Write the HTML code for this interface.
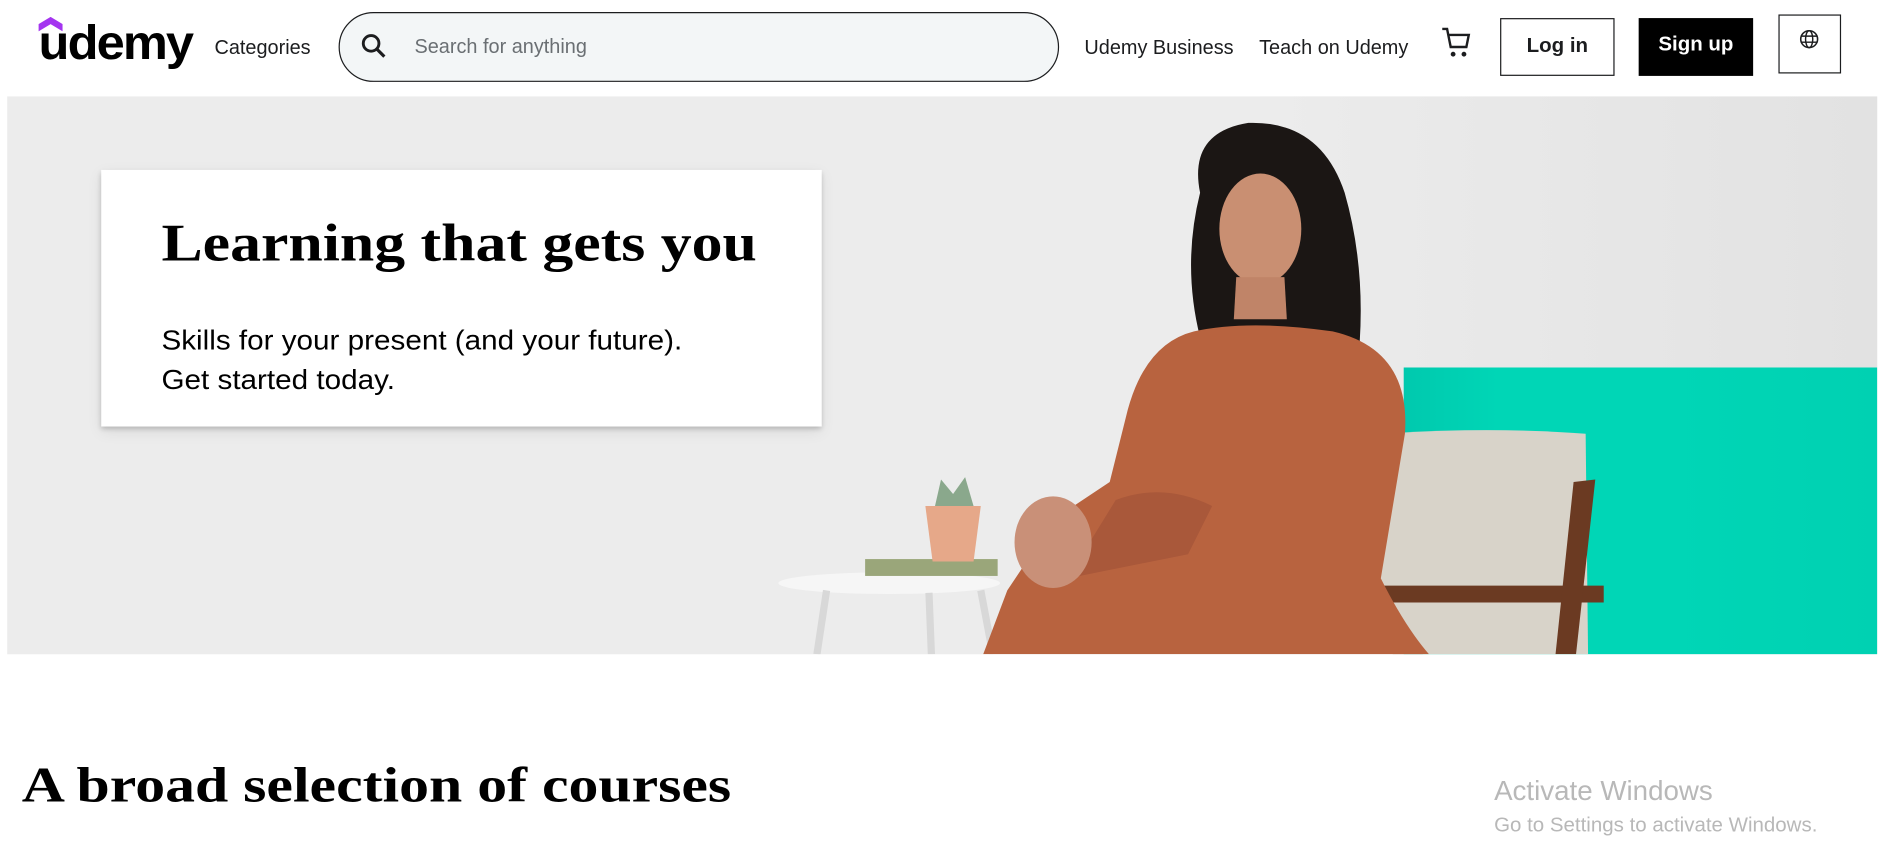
<!DOCTYPE html>
<html><head><meta charset="utf-8"><style>
html,body{margin:0;padding:0;background:#fff;overflow:hidden;width:1889px;height:854px}
#w{width:1560px;height:710px;position:relative;transform:scale(1.2049);transform-origin:0 0;font-family:"Liberation Sans",sans-serif;color:#1c1d1f}
.a{position:absolute;white-space:nowrap}
.serif{font-family:"Liberation Serif",serif;font-weight:bold;transform-origin:0 0}
</style></head><body><div id="w">
<div class="a" style="left:32px;top:14px;font-size:40px;font-weight:bold;letter-spacing:-1.5px;color:#000;transform:scaleX(1.05);transform-origin:0 0">udemy</div>
<svg class="a" style="left:32px;top:14px" width="20" height="12"><path d="M0 12V6L10 0L20 6V12L10 6Z" fill="#a435f0"/></svg>
<div class="a" style="left:178px;top:31px;font-size:16.5px">Categories</div>
<div class="a" style="left:281px;top:10px;width:596px;height:56px;border:1px solid #1c1d1f;border-radius:29px;background:#f3f6f7"></div>
<svg class="a" style="left:299px;top:27px" width="22" height="22"><circle cx="9" cy="9" r="6.5" stroke="#1c1d1f" stroke-width="2.4" fill="none"/><path d="M14 14L20 20" stroke="#1c1d1f" stroke-width="2.6"/></svg>
<div class="a" style="left:344px;top:30px;font-size:16.5px;color:#6a6f73">Search for anything</div>
<div class="a" style="left:900px;top:31px;font-size:16.5px">Udemy Business</div>
<div class="a" style="left:1045px;top:31px;font-size:16.5px">Teach on Udemy</div>
<svg class="a" style="left:1196px;top:22px" width="26" height="28"><path d="M1 2H5L8 17H21L23 7H6" stroke="#1c1d1f" stroke-width="2" fill="none"/><circle cx="10" cy="23" r="2" fill="#1c1d1f"/><circle cx="19" cy="23" r="2" fill="#1c1d1f"/></svg>
<div class="a" style="left:1245px;top:15px;width:93px;height:46px;border:1px solid #1c1d1f;font-weight:bold;font-size:17px;text-align:center;line-height:44px">Log in</div>
<div class="a" style="left:1360px;top:15px;width:95px;height:48px;background:#000;color:#fff;font-weight:bold;font-size:17px;text-align:center;line-height:44px">Sign up</div>
<div class="a" style="left:1476px;top:12px;width:50px;height:47px;border:1px solid #1c1d1f"></div>
<svg class="a" style="left:1493px;top:24px" width="17" height="17"><circle cx="8.5" cy="8.5" r="7" stroke="#1c1d1f" stroke-width="1.3" fill="none"/><ellipse cx="8.5" cy="8.5" rx="3" ry="7" stroke="#1c1d1f" stroke-width="1.2" fill="none"/><path d="M1.5 6H15.5M1.5 11H15.5" stroke="#1c1d1f" stroke-width="1.2"/></svg>
<div class="a" style="left:6px;top:80px;width:1552px;height:463px;background:#ececec;overflow:hidden">
<div class="a" style="left:1040px;top:0;width:512px;height:463px;background:linear-gradient(90deg,#ececec,#e2e2e2)"></div>
<div class="a" style="left:1159px;top:225px;width:393px;height:238px;background:linear-gradient(90deg,#00c9ae 0%,#00d6b6 20%,#00d6b6 55%,#00d1b2 100%)"></div>
<svg class="a" style="left:0;top:0" width="1552" height="463">
<ellipse cx="732" cy="404" rx="92" ry="9" fill="#f6f6f6"/>
<path d="M680 410L672 463M765 412L767 463M808 410L818 463" stroke="#d8d8d8" stroke-width="6"/>
<rect x="712" y="384" width="110" height="14" fill="#9aa67a"/>
<path d="M762 340H808L802 386H768Z" fill="#e6a889"/>
<path d="M770 340L775 318L785 330L795 316L802 340Z" fill="#8aa88c"/>
<path d="M1142 280Q1230 274 1310 280L1312 463H1130Z" fill="#d8d3c9"/>
<path d="M1090 406H1325V420H1090Z" fill="#6b3a22"/>
<path d="M1300 320L1318 318L1302 463H1285Z" fill="#6b3a22"/>
<path d="M1110 420L1175 463H1150Z" fill="#6b3a22"/>
<path d="M990 80Q980 30 1030 22Q1090 20 1110 80Q1130 150 1120 230L1060 240L990 200Q975 140 990 80Z" fill="#1b1614"/>
<ellipse cx="1040" cy="110" rx="34" ry="46" fill="#c98f72"/>
<path d="M1020 150H1060L1062 185H1018Z" fill="#c08468"/>
<path d="M985 195Q1030 185 1100 195Q1165 210 1160 280L1140 400Q1160 440 1180 463H810L830 410L870 350L915 320L930 260Q945 205 985 195Z" fill="#b8633f"/>
<path d="M920 335Q960 320 1000 340L980 380L880 400Z" fill="#a9583a"/>
<ellipse cx="868" cy="370" rx="32" ry="38" fill="#c99078"/>
</svg>
</div>
<div class="a" style="left:84px;top:141px;width:598px;height:213px;background:#fff;box-shadow:0 2px 4px rgba(0,0,0,.2),0 4px 12px rgba(0,0,0,.08)"></div>
<div class="a serif" style="left:134px;top:176px;font-size:44px;color:#000;transform:scaleX(1.165)">Learning that gets you</div>
<div class="a" style="left:134px;top:266px;font-size:23px;line-height:33px;color:#000;transform:scaleX(1.07);transform-origin:0 0">Skills for your present (and your future).<br>Get started today.</div>
<div class="a serif" style="left:18px;top:627px;font-size:41px;color:#000;transform:scaleX(1.21)">A broad selection of courses</div>
<div class="a" style="left:1240px;top:643px;font-size:23px;color:#b8b8b8">Activate Windows</div>
<div class="a" style="left:1240px;top:675px;font-size:17px;color:#b8b8b8">Go to Settings to activate Windows.</div>
</div></body></html>
